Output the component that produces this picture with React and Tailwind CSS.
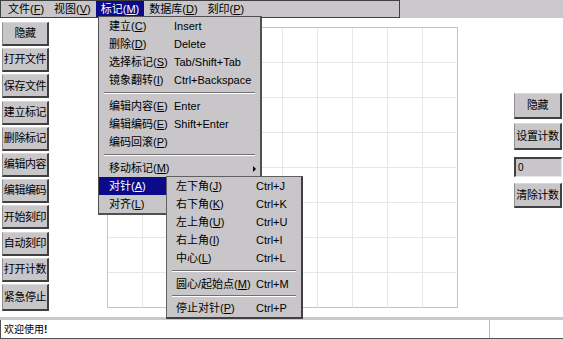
import React from "react";

const F = "font-['Liberation_Sans','Noto_Sans_CJK_SC',sans-serif]";

function Acc({ t, k }) {
  return (
    <>
      {t}(<span className="underline">{k}</span>)
    </>
  );
}

function Btn({ children, h = "h-[24px]", extra = "" }) {
  return (
    <div
      className={`${h} w-[47px] ${extra} flex items-center justify-center bg-[#c8c6c8] border-t border-l border-t-[#d8d8d8] border-l-[#909090] border-r-2 border-b-2 border-r-[#404040] border-b-[#404040] text-[11px] tracking-[-0.4px] whitespace-nowrap text-black`}
    >
      {children}
    </div>
  );
}

const mainItems = [
  { t: "建立", k: "C", s: "Insert" },
  { t: "删除", k: "D", s: "Delete" },
  { t: "选择标记", k: "S", s: "Tab/Shift+Tab" },
  { t: "镜象翻转", k: "I", s: "Ctrl+Backspace" },
  { sep: true, h: "h-[8px]" },
  { t: "编辑内容", k: "E", s: "Enter" },
  { t: "编辑编码", k: "E", s: "Shift+Enter" },
  { t: "编码回滚", k: "P" },
  { sep: true, h: "h-[8px]" },
  { t: "移动标记", k: "M", arrow: true },
  { t: "对针", k: "A", hl: true },
  { t: "对齐", k: "L" },
];

const subItems = [
  { t: "左下角", k: "J", s: "Ctrl+J" },
  { t: "右下角", k: "K", s: "Ctrl+K" },
  { t: "左上角", k: "U", s: "Ctrl+U" },
  { t: "右上角", k: "I", s: "Ctrl+I" },
  { t: "中心", k: "L", s: "Ctrl+L" },
  { sep: true, h: "h-[8px]" },
  { t: "圆心/起始点", k: "M", s: "Ctrl+M" },
  { sep: true, h: "h-[6px]" },
  { t: "停止对针", k: "P", s: "Ctrl+P" },
];

function Sep({ h }) {
  return (
    <div className={`${h} flex flex-col justify-center px-[5px]`}>
      <div className="h-[1px] bg-[#707070]" />
      <div className="h-[1px] bg-white" />
    </div>
  );
}

export default function App() {
  const cells = Array.from({ length: 80 });
  return (
    <div className={`${F} relative w-[563px] h-[339px] bg-white overflow-hidden text-black`}>
      {/* menubar */}
      <div className="h-[18px] flex bg-[#cac8ca]">
        <div className="w-[400px] h-full border border-[#404040] flex items-stretch pl-[2px] text-[11px] bg-[#c8c6c8]">
          <div className="px-[5px] flex items-center"><Acc t="文件" k="F" /></div>
          <div className="px-[5px] flex items-center"><Acc t="视图" k="V" /></div>
          <div className="px-[5px] flex items-center bg-[#0a0a8a] text-white"><Acc t="标记" k="M" /></div>
          <div className="px-[5px] flex items-center"><Acc t="数据库" k="D" /></div>
          <div className="px-[5px] flex items-center"><Acc t="刻印" k="P" /></div>
        </div>
      </div>

      {/* main */}
      <div className="h-[299px] flex">
        <div className="pl-[2px] pt-[4px] flex flex-col gap-[2.2px]">
          {["隐藏", "打开文件", "保存文件", "建立标记", "删除标记", "编辑内容", "编辑编码", "开始刻印", "自动刻印", "打开计数"].map((b) => (
            <Btn key={b}>{b}</Btn>
          ))}
          <Btn h="h-[27px]">紧急停止</Btn>
        </div>

        <div className="ml-[58px] mt-[9px]">
          <div className="grid grid-cols-10 border-l border-t border-[#c4c4c4] w-[351px]">
            {cells.map((_, i) => (
              <div
                key={i}
                className={`h-[35px] border-r border-b ${i % 10 === 9 ? "border-r-[#c4c4c4]" : "border-r-[#e6e6e6]"} ${i >= 70 ? "border-b-[#c4c4c4]" : "border-b-[#e6e6e6]"}`}
              />
            ))}
          </div>
        </div>

        <div className="ml-[56px] pt-[75px] flex flex-col">
          <Btn h="h-[26px]" extra="!w-[48px]">隐藏</Btn>
          <Btn h="h-[27px]" extra="!w-[48px] mt-[4px]">设置计数</Btn>
          <div className="mt-[7px] h-[20px] w-[48px] bg-[#c8c6c8] border-t-2 border-l-2 border-t-[#404040] border-l-[#404040] border-r border-b border-r-[#e8e8e8] border-b-[#e8e8e8] text-[10px] pl-[2px] flex items-center">
            0
          </div>
          <Btn h="h-[25px]" extra="!w-[48px] mt-[6px]">清除计数</Btn>
        </div>
      </div>

      {/* status bar */}
      <div className="h-[22px] border-t-[3px] border-[#cac8ca] flex">
        <div className="flex-1 flex border-l border-b border-[#505050] bg-white">
          <div className="w-[489px] border-r border-[#b8b8b8] text-[10px] pl-[3px] flex items-center">
            欢迎使用<span className="font-bold">!</span>
          </div>
          <div className="flex-1" />
        </div>
      </div>

      {/* dropdown menu */}
      <div className="absolute left-[98px] top-[16px] w-[164px] bg-[#c8c6c8] border border-[#505050] border-r-2 border-b-2 text-[11px]">
        {mainItems.map((it, i) =>
          it.sep ? (
            <Sep key={i} h={it.h} />
          ) : (
            <div key={i} className={`h-[18px] flex items-center pl-[10px] relative ${it.hl ? "bg-[#0a0a8a] text-white" : ""}`}>
              <div className="w-[65px] whitespace-nowrap"><Acc t={it.t} k={it.k} /></div>
              {it.s && <div className="whitespace-nowrap">{it.s}</div>}
              {it.arrow && (
                <div className="absolute right-[4px] top-[7px] w-0 h-0 border-y-[3px] border-y-transparent border-l-[3px] border-l-black" />
              )}
            </div>
          )
        )}
      </div>

      {/* submenu */}
      <div className="absolute left-[166px] top-[176px] w-[137px] bg-[#c8c6c8] border border-[#606060] border-r-2 border-b-2 border-r-[#404040] border-b-[#404040] text-[11px]">
        {subItems.map((it, i) =>
          it.sep ? (
            <Sep key={i} h={it.h} />
          ) : (
            <div key={i} className="h-[18px] flex items-center pl-[9px]">
              <div className="w-[80px] whitespace-nowrap"><Acc t={it.t} k={it.k} /></div>
              <div className="whitespace-nowrap">{it.s}</div>
            </div>
          )
        )}
      </div>
    </div>
  );
}
